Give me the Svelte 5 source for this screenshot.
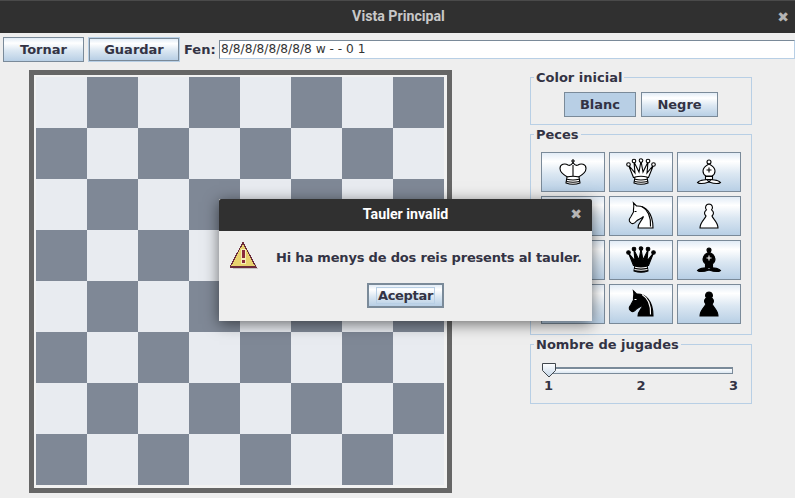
<script>
	const cells = Array.from({ length: 64 }, (_, i) => (Math.floor(i / 8) + i) % 2 === 1);

	const ball = (x, y, r) => `M${x - r} ${y}a${r} ${r} 0 1 0 ${2 * r} 0a${r} ${r} 0 1 0 ${-2 * r} 0z`;

	// every shape is [path, isBody]: bodies get filled, details are only stroked
	const base = 'M26 25Q32 23.5 38 25L39 31Q32 33.5 25 31Z';
	const baseLines = 'M26 27.3Q32 28.8 38 27.3M25.5 29.5Q32 31 38.5 29.5';

	const shapes = {
		king: [
			['M26.5 25C22 22.5 19 19.5 19 16.5C19 12 24 11 27 13C29 14 30.5 13 32 10.5C33.5 13 35 14 37 13C40 11 45 12 45 16.5C45 19.5 42 22.5 37.5 25Z', true],
			['M32 7V12M30 9H34', false, true],
			['M32 13V24', false],
			[base, true],
			[baseLines, false]
		],
		queen: [
			['M24.5 25.5L19.5 13L26 21L25 10L30 20L32 9L34 20L39 10L38 21L44.5 13L39.5 25.5Z', true],
			[ball(19.5, 12.5, 1.8), true],
			[ball(25, 9, 1.8), true],
			[ball(32, 8.6, 1.8), true],
			[ball(39, 9, 1.8), true],
			[ball(44.5, 12.5, 1.8), true],
			[base, true],
			[baseLines, false]
		],
		bishop: [
			[ball(32, 10, 2), true],
			['M32 12C28 14 26 17 26 19C26 22 28 23.5 29 24H35C36 23.5 38 22 38 19C38 17 36 14 32 12Z', true],
			['M32 15.5V20.5M29.5 18H34.5', false],
			['M28.5 24.5H35.5V27.5H28.5Z', true],
			['M20.5 30.5C23 27.5 27 28.5 30 27.5L32 30L34 27.5C37 28.5 41 27.5 43.5 30.5C41 32.5 36.5 31.5 32 30C27.5 31.5 23 32.5 20.5 30.5Z', true]
		],
		rook: [['M24 9H28V12H30V9H34V12H36V9H40V16L37 18V27L40 32H24L27 27V18L24 16Z', true]],
		knight: [
			['M24.5 7L27.5 10C36 9.5 44 16 44 32H29C29 27 33 25 34.5 20.5C32 23 29 23 27 25.5C25.5 27.5 23 28.5 21.5 26.5C19.5 25 20 23 22 20.5L24.5 16C24 13 25.5 11 24.5 7Z', true],
			['M25.5 15.5H27.5M33 10.5C39 14 42 21 41.5 30.5', false]
		],
		pawn: [
			['M32 8A3.5 3.5 0 0 1 34.6 13.8C36 15 36.5 16 36.5 17C36.5 18.5 35.5 19.5 35 20C36 23 41 26 41 32H23C23 26 28 23 29 20C28.5 19.5 27.5 18.5 27.5 17C27.5 16 28 15 29.4 13.8A3.5 3.5 0 0 1 32 8Z', true]
		]
	};

	const pieces = [
		['king', false], ['queen', false], ['bishop', false],
		['rook', false], ['knight', false], ['pawn', false],
		['king', true], ['queen', true], ['bishop', true],
		['rook', true], ['knight', true], ['pawn', true]
	];
</script>

<div class="window">
	<header class="titlebar">
		<span class="title">Vista Principal</span>
		<span class="close">✖</span>
	</header>

	<div class="toolbar">
		<button class="btn tornar">Tornar</button>
		<button class="btn guardar">Guardar</button>
		<span class="fen-label">Fen:</span>
		<div class="fen-field">8/8/8/8/8/8/8/8 w - - 0 1</div>
	</div>

	<main class="content">
		<div class="board">
			<div class="squares">
				{#each cells as dark}
					<div class:dark></div>
				{/each}
			</div>
		</div>

		<aside class="side">
			<fieldset class="group color">
				<legend>Color inicial</legend>
				<div class="color-row">
					<button class="btn blanc">Blanc</button>
					<button class="btn negre">Negre</button>
				</div>
			</fieldset>

			<fieldset class="group peces">
				<legend>Peces</legend>
				<div class="piece-grid">
					{#each pieces as [kind, black]}
						<button class="btn piece">
							<svg width="62" height="38" viewBox="1 1 62 38">
								{#each shapes[kind] as [d, body, line]}
									<path
										{d}
										fill={body ? (black ? '#000' : '#fff') : 'none'}
										stroke={black && !line ? (body ? '#000' : '#fff') : '#000'}
										stroke-width="1.1"
									/>
								{/each}
							</svg>
						</button>
					{/each}
				</div>
			</fieldset>

			<fieldset class="group jugades">
				<legend>Nombre de jugades</legend>
				<div class="slider">
					<div class="track"></div>
					<svg class="thumb" width="16" height="16" viewBox="0 0 16 16">
						<defs>
							<linearGradient id="th" x1="0" y1="0" x2="0" y2="1">
								<stop offset="0" stop-color="#ffffff" />
								<stop offset="1" stop-color="#c4d6e8" />
							</linearGradient>
						</defs>
						<path d="M1.5 1.5h13v7l-6.5 6.5l-6.5-6.5z" fill="url(#th)" stroke="#40464c" />
					</svg>
				</div>
				<div class="ticks">
					<span>1</span>
					<span>2</span>
					<span>3</span>
				</div>
			</fieldset>
		</aside>
	</main>

	<div class="dialog">
		<header class="dialog-bar">
			<span class="dialog-title">Tauler invalid</span>
			<span class="dialog-close">✖</span>
		</header>
		<div class="dialog-body">
			<svg class="warn" width="28" height="30" viewBox="0 0 28 30" shape-rendering="crispEdges">
				<path d="M14 2L27 26H2z" fill="#000" opacity="0.18" transform="translate(1 1)" />
				<path d="M13 .5L26 25H0z" fill="#e8d26e" stroke="#6b2a3a" stroke-width="1.2" />
				<rect x="11" y="7" width="5" height="15" fill="#f6eeb4" />
				<rect x="12" y="8" width="3" height="8" fill="#8a2b3c" />
				<rect x="12" y="18" width="3" height="3" fill="#8a2b3c" />
			</svg>
			<span class="message">Hi ha menys de dos reis presents al tauler.</span>
		</div>
		<div class="dialog-actions">
			<button class="btn aceptar"><span>Aceptar</span></button>
		</div>
	</div>
</div>

<style>
	:global(body) {
		margin: 0;
		background: #eeeeee;
	}
	.window {
		position: relative;
		width: 795px;
		height: 498px;
		overflow: hidden;
		background: #eeeeee;
		font-family: 'DejaVu Sans', sans-serif;
		font-weight: bold;
		font-size: 13px;
		color: #333344;
	}
	.titlebar {
		display: flex;
		align-items: center;
		justify-content: center;
		position: relative;
		box-sizing: border-box;
		height: 33px;
		padding: 0 0 3px 2px;
		background: #303030;
		border-top: 1px solid #4a4a4a;
	}
	.title {
		font-family: Roboto, sans-serif;
		font-weight: bold;
		font-size: 14.2px;
		color: #c8c8c8;
	}
	.close {
		position: absolute;
		right: 6px;
		top: 9px;
		font-size: 14px;
		line-height: 14px;
		color: #b4b4b4;
	}
	.toolbar {
		display: flex;
		align-items: center;
		height: 33px;
		padding-left: 3px;
		box-sizing: border-box;
	}
	.btn {
		box-sizing: border-box;
		margin: 0;
		padding: 0;
		border: 1px solid #7a8a99;
		border-radius: 0;
		background: linear-gradient(#e2ecf6 0%, #ffffff 22%, #dbe7f2 55%, #b8cfe5 100%);
		font: inherit;
		color: #333344;
	}
	.tornar {
		width: 81px;
		height: 25px;
	}
	.guardar {
		width: 90px;
		height: 23px;
		margin-left: 5px;
		outline: 1px solid #b8cfe5;
	}
	.fen-label {
		flex: none;
		width: 30px;
		margin-left: 5px;
	}
	.fen-field {
		box-sizing: border-box;
		width: 576px;
		height: 19px;
		margin-left: 5px;
		padding-left: 1px;
		background: #ffffff;
		border: 1px solid #7a8a99;
		border-right-color: #b8cfe5;
		border-bottom-color: #b8cfe5;
		font-weight: normal;
		font-size: 12.2px;
		line-height: 16px;
		color: #333333;
	}
	.content {
		display: flex;
		align-items: flex-start;
		padding: 4px 0 0 29px;
	}
	.board {
		box-sizing: border-box;
		width: 423px;
		height: 423px;
		padding: 2px 3px 3px 2px;
		background: #f2f2f2;
		border: 5px solid #666666;
	}
	.squares {
		display: grid;
		grid-template-columns: repeat(8, 51px);
		grid-template-rows: repeat(8, 51px);
		background: #e8ebf0;
	}
	.squares .dark {
		background: #7f8896;
	}
	.side {
		display: flex;
		flex-direction: column;
		width: 222px;
		margin-left: 78px;
		margin-top: -1px;
	}
	.group {
		box-sizing: border-box;
		min-width: 0;
		margin: 0;
		padding: 0;
		border: 1px solid #b8cfe5;
	}
	.group legend {
		margin-left: 3px;
		padding: 2px 2px 0;
		line-height: 14px;
	}
	.color {
		height: 56px;
	}
	.color-row {
		display: flex;
		gap: 5px;
		padding: 7px 0 0 33px;
	}
	.blanc {
		width: 72px;
		height: 25px;
		background: #b8cfe5;
	}
	.negre {
		width: 77px;
		height: 25px;
	}
	.peces {
		height: 209px;
		margin-top: 1px;
	}
	.piece-grid {
		display: grid;
		grid-template-columns: repeat(3, 64px);
		grid-auto-rows: 40px;
		gap: 4px;
		padding: 10px 0 0 10px;
	}
	.piece {
		display: block;
		line-height: 0;
	}
	.jugades {
		height: 68px;
		margin-top: 1px;
	}
	.slider {
		position: relative;
		height: 17px;
		margin: 10px 18px 0 17px;
	}
	.track {
		position: absolute;
		left: 0;
		right: 0;
		top: 5px;
		box-sizing: border-box;
		height: 7px;
		background: linear-gradient(#ffffff, #dbe7f2);
		border: 1px solid #7a8a99;
		border-top-width: 2px;
	}
	.thumb {
		position: absolute;
		left: -7px;
		top: 0;
	}
	.ticks {
		display: flex;
		justify-content: space-between;
		margin: 0 13px 0 13px;
		line-height: 14px;
	}
	.dialog {
		position: absolute;
		left: 219px;
		top: 199px;
		width: 373px;
		height: 122px;
		background: #eeeeee;
		box-shadow: 0 3px 14px rgba(0, 0, 0, 0.55);
	}
	.dialog-bar {
		display: flex;
		align-items: center;
		justify-content: center;
		position: relative;
		box-sizing: border-box;
		height: 32px;
		padding-bottom: 2px;
		background: #303030;
		border-radius: 2px 2px 0 0;
	}
	.dialog-title {
		font-family: Roboto, sans-serif;
		font-weight: bold;
		font-size: 14.2px;
		color: #ffffff;
	}
	.dialog-close {
		position: absolute;
		right: 10px;
		top: 8px;
		font-size: 14px;
		line-height: 14px;
		color: #b4b4b4;
	}
	.dialog-body {
		display: flex;
		align-items: center;
		height: 52px;
		padding-left: 11px;
	}
	.warn {
		flex: none;
	}
	.message {
		margin-left: 18px;
		white-space: nowrap;
		letter-spacing: -0.18px;
	}
	.dialog-actions {
		display: flex;
		justify-content: center;
	}
	.aceptar {
		width: 77px;
		height: 25px;
		border-width: 2px;
		letter-spacing: -0.3px;
	}
	.aceptar span {
		display: inline-block;
		padding: 0 1px;
		line-height: 15px;
		outline: 1px solid #b8cfe5;
	}
</style>
